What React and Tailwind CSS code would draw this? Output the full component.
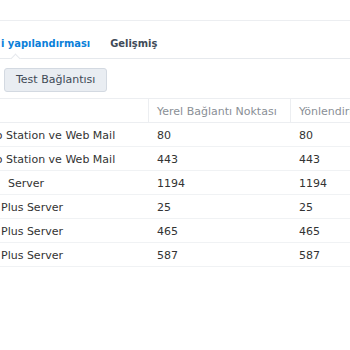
import React from "react";

const ROWS = [
  { pre: "Photo", name: "Station ve Web Mail", local: "80", router: "80", pl: "pl-[6px]", gap: "" },
  { pre: "Photo", name: "Station ve Web Mail", local: "443", router: "443", pl: "pl-[6px]", gap: "" },
  { pre: "VPN", name: "Server", local: "1194", router: "1194", pl: "pl-[0px]", gap: "ml-[8px]" },
  { pre: "Mail", name: "Plus Server", local: "25", router: "25", pl: "pl-[1px]", gap: "" },
  { pre: "Mail", name: "Plus Server", local: "465", router: "465", pl: "pl-[1px]", gap: "" },
  { pre: "Mail", name: "Plus Server", local: "587", router: "587", pl: "pl-[1px]", gap: "" },
];

export default function App() {
  return (
    <div className="h-[350px] w-[350px] overflow-hidden bg-white font-['DejaVu_Sans',sans-serif] text-[11px] text-[#333]">
      <div className="h-[21px] border-b border-[#eceef1]" />

      {/* TABS */}
      <div className="relative flex h-[38px] items-center whitespace-nowrap border-b border-[#e6e9ed] pt-[9px] font-['DejaVu_Sans_Condensed','DejaVu_Sans',sans-serif] text-[11px] font-bold">
        <span className="inline-flex w-0 justify-end text-[#0a7fd9]">Yönlendiric</span>
        <span className="ml-[1px] text-[#0a7fd9]">i yapılandırması</span>
        <span className="ml-[20px] text-[#404a57]">Gelişmiş</span>
        <span className="absolute bottom-[-4px] left-[12px] h-[7px] w-[7px] rotate-45 border-l border-t border-[#e6e9ed] bg-white" />
      </div>

      {/* TOOLBAR */}
      <div className="flex h-[40px] items-center border-b border-[#eceef1] pl-[4px] pt-[3px]">
        <button className="h-[24px] rounded-[3px] border border-[#d3d9e1] bg-[#e9edf2] px-[11px] text-[#404a57]">
          Test Bağlantısı
        </button>
      </div>

      {/* TABLE */}
      <div className="flex h-[24px] border-b border-[#eceef1] text-[#8a8f96]">
        <div className="w-[149px] shrink-0 border-r border-[#eceef1]" />
        <div className="flex w-[142px] shrink-0 items-center whitespace-nowrap border-r border-[#eceef1] pl-[8px] pt-[3px]">
          Yerel Bağlantı Noktası
        </div>
        <div className="flex items-center whitespace-nowrap pl-[8px] pt-[3px]">Yönlendirici Bağlantı Noktası</div>
      </div>
      {ROWS.map((r, i) => (
        <div key={i} className="flex h-[24px] items-center border-b border-[#f0f2f4] pt-[4px]">
          <div className={"flex w-[149px] shrink-0 overflow-hidden whitespace-nowrap " + r.pl}>
            <span className="inline-flex w-0 justify-end">{r.pre}&nbsp;</span>
            <span className={r.gap}>{r.name}</span>
          </div>
          <div className="w-[142px] shrink-0 pl-[8px]">{r.local}</div>
          <div className="pl-[8px]">{r.router}</div>
        </div>
      ))}
    </div>
  );
}
